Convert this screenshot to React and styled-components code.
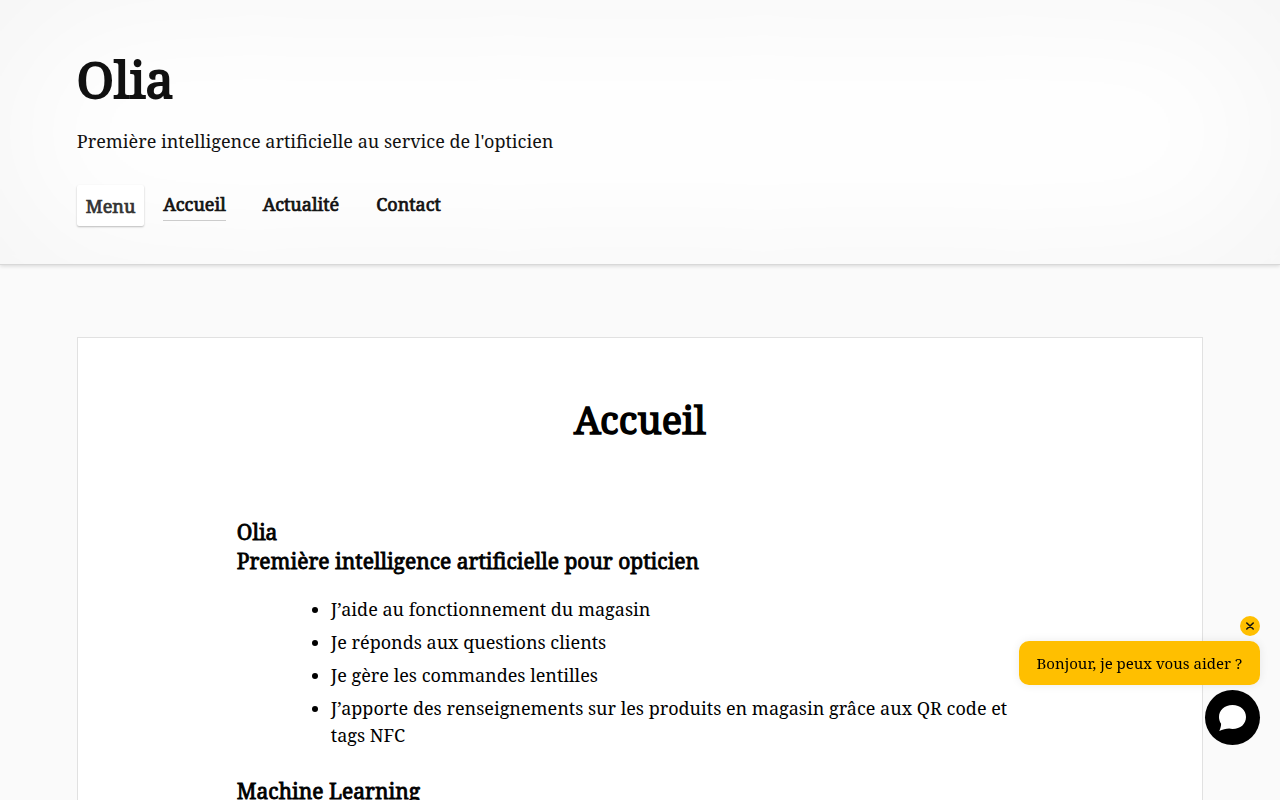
import React from "react";
import styled, { createGlobalStyle, css } from "styled-components";

const GlobalStyle = createGlobalStyle`
	body {
		margin: 0;
		background: #fafafa;
		color: #000;
		font-family: "Noto Serif", serif;
		font-size: 18px;
		line-height: 27px;
	}
`;

const strong = css`
	font-weight: 400;
	-webkit-text-stroke: 0.04em currentColor;
`;

const Header = styled.header`
	padding: 47px 6% 38px;
	color: #111;
	background: #fff;
	border-bottom: 1px solid #d8d8d8;
	box-shadow: 0 1px 4px rgba(0, 0, 0, 0.15), inset 0 0 160px rgba(0, 0, 0, 0.05);
`;

const SiteTitle = styled.h1`
	${strong}
	margin: 0;
	font-size: 50px;
	line-height: 64px;
`;

const Tagline = styled.p`
	margin: 17px 0 30px;
`;

const Nav = styled.nav`
	display: flex;
	align-items: center;
`;

const MenuBtn = styled.button`
	${strong}
	height: 41px;
	padding: 0 9px;
	margin-right: 19px;
	border: none;
	border-radius: 2px;
	background: #fff;
	color: #333;
	font-family: inherit;
	font-size: 18px;
	box-shadow: 0 1px 2px rgba(0, 0, 0, 0.25);
	cursor: pointer;
`;

const NavList = styled.div`
	display: flex;
	gap: 37px;
`;

const NavLink = styled.a`
	${strong}
	padding-bottom: 2px;
	border-bottom: 1px solid ${(props) => (props.$active ? "#ccc" : "transparent")};
	color: #111;
	text-decoration: none;
`;

const Article = styled.article`
	margin: 72px 6%;
	padding: 54px 14% 60px;
	background: #fff;
	border: 1px solid #e1e1e1;

	@media (min-width: 900px) {
		padding-left: 159px;
		padding-right: 159px;
	}
`;

const PageTitle = styled.h1`
	${strong}
	margin: 0 0 72px;
	font-size: 38px;
	line-height: 54px;
	text-align: center;
`;

const SectionTitle = styled.h2`
	${strong}
	margin: 0;
	font-size: 21px;
	line-height: 29px;
`;

const List = styled.ul`
	margin: 20px 0 28px;
	padding: 0 0 0 94px;
`;

const Item = styled.li`
	margin-bottom: 6px;
`;

const Chat = styled.aside`
	position: fixed;
	right: 20px;
	bottom: 55px;
	display: flex;
	flex-direction: column;
	align-items: flex-end;
	gap: 5px;
`;

const CloseBtn = styled.button`
	display: flex;
	align-items: center;
	justify-content: center;
	width: 20px;
	height: 20px;
	padding: 0;
	border: none;
	border-radius: 50%;
	background: #ffbf00;
	cursor: pointer;
`;

const Bubble = styled.div`
	padding: 10px 18px;
	border-radius: 10px;
	background: #ffbf00;
	font-size: 15px;
	line-height: 24px;
	box-shadow: 0 0 10px rgba(0, 0, 0, 0.08);
`;

const ChatBtn = styled.button`
	display: flex;
	align-items: center;
	justify-content: center;
	width: 55px;
	height: 55px;
	padding: 0;
	border: none;
	border-radius: 50%;
	background: #000;
	cursor: pointer;
`;

const links = ["Accueil", "Actualité", "Contact"];

const items = [
	"J’aide au fonctionnement du magasin",
	"Je réponds aux questions clients",
	"Je gère les commandes lentilles",
	"J’apporte des renseignements sur les produits en magasin grâce aux QR code et tags NFC",
];

const ChatWidget = () => {
	return (
		<Chat>
			<CloseBtn aria-label="Fermer">
				<svg
					width="8"
					height="8"
					viewBox="0 0 8 8"
					fill="none"
					stroke="#111"
					strokeWidth="1.6"
					strokeLinecap="round"
				>
					<path d="M.8 1 7.200 7M7.200 1 .8 7" />
				</svg>
			</CloseBtn>
			<Bubble>Bonjour, je peux vous aider ?</Bubble>
			<ChatBtn aria-label="Ouvrir le chat">
				<svg width="27" height="26" viewBox="0 0 27 26" fill="#fff">
					<path d="M13.500 0C21.500 0 27 5 27 12s-5.500 12-13.500 12c-1.200 0-2.300-.2-3.300-.5C7 23.500 3.500 24.800.3 26c1-2.300 1.800-4.700 1.800-7.300C.7 16.700 0 14.500 0 12 0 5 5.500 0 13.500 0z" />
				</svg>
			</ChatBtn>
		</Chat>
	);
};

const App = () => {
	return (
		<>
			<GlobalStyle />
			<Header>
				<SiteTitle>Olia</SiteTitle>
				<Tagline>Première intelligence artificielle au service de l'opticien</Tagline>
				<Nav>
					<MenuBtn>Menu</MenuBtn>
					<NavList>
						{links.map((link, i) => (
							<NavLink key={link} href="#" $active={i === 0}>
								{link}
							</NavLink>
						))}
					</NavList>
				</Nav>
			</Header>
			<Article>
				<PageTitle>Accueil</PageTitle>
				<SectionTitle>
					Olia
					<br />
					Première intelligence artificielle pour opticien
				</SectionTitle>
				<List>
					{items.map((item) => (
						<Item key={item}>{item}</Item>
					))}
				</List>
				<SectionTitle>Machine Learning</SectionTitle>
			</Article>
			<ChatWidget />
		</>
	);
};

export default App;
